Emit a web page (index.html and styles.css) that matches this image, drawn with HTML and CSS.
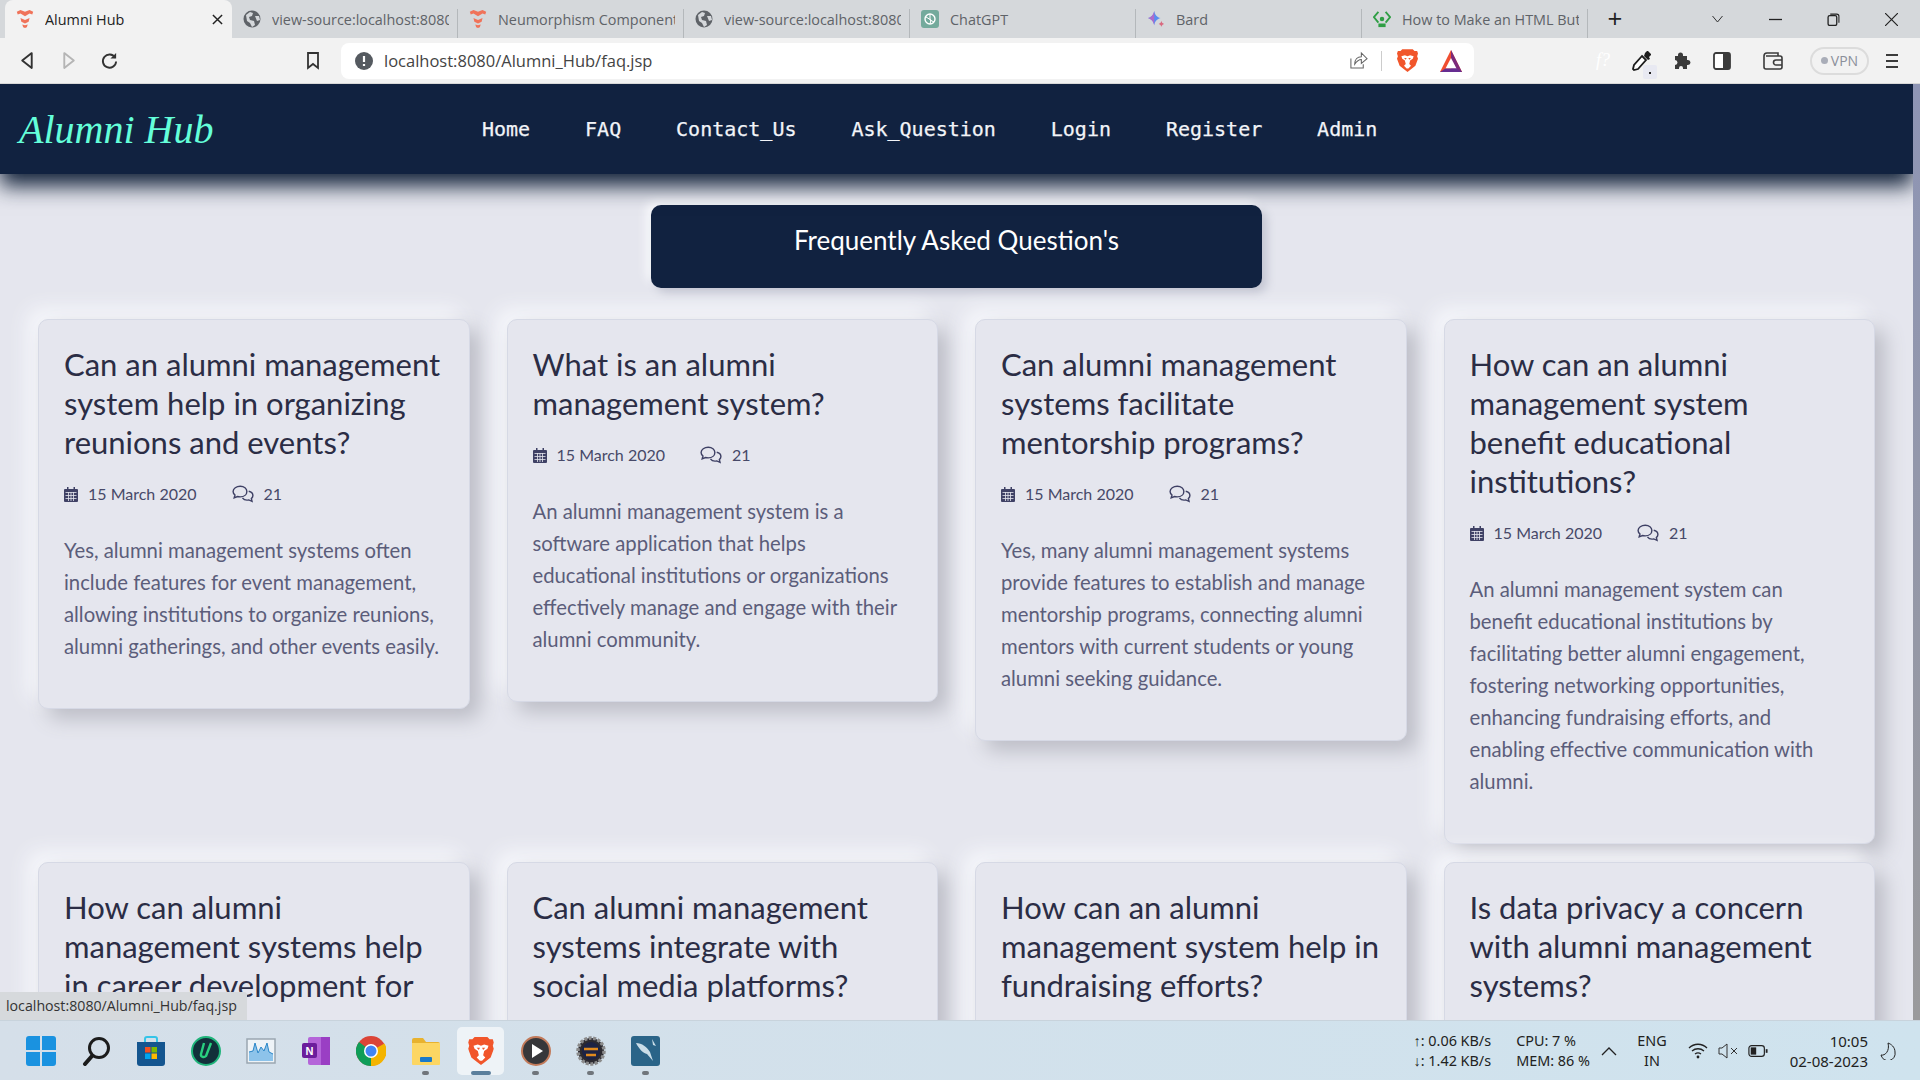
FILE: index.html
```html
<!DOCTYPE html>
<html lang="en">
<head>
  <meta charset="UTF-8" />
  <title>Alumni Hub</title>
  <link rel="stylesheet" href="styles.css">
</head>
<body>

<svg class="sprites" width="0" height="0">
  <symbol id="flame" viewBox="0 0 18 22">
    <path d="M0 3l4-2 5 2 5-2 4 2-1 3-3-1-5 3-5-3-3 1z" fill="#f0735a"/>
    <path d="M4 10l5 2 5-2-1 4-4 2-4-2z" fill="#f0735a"/>
    <path d="M6 17l3 1 3-1-1 3-2 1-2-1z" fill="#f0735a"/>
  </symbol>
  <symbol id="globe" viewBox="0 0 18 18">
    <circle cx="9" cy="9" r="8.500" fill="#5f6368"/>
    <path d="M3 5l4-3 3 1-1 3-3 1 1 3 4 1 1 4-3 2-2-4-3-2zM12 6l4 0 1 4-3 1z" fill="#d5d8db"/>
  </symbol>
  <symbol id="lion" viewBox="0 0 24 28">
    <path d="M6 1h12l2 2 3 0 1 3-1 3 1 3-3 8-5 4-4 3-4-3-5-4-3-8 1-3-1-3 1-3 3 0z" fill="#f1562b"/>
    <path d="M5 9l4-1 3 1 3-1 4 1-1 3-3 2-1 4 2 2-3 3h-2l-3-3 2-2-1-4-3-2z" fill="#fff"/>
    <path d="M8 11h3l-1 2zM13 11h3l-2 2z" fill="#f1562b"/>
  </symbol>
  <symbol id="cal" viewBox="0 0 14 15">
    <path d="M3 0h1.500v2h5V0H11v2h2a1 1 0 0 1 1 1v11a1 1 0 0 1-1 1H1a1 1 0 0 1-1-1V3a1 1 0 0 1 1-1h2z" fill="#3f4165"/>
    <path d="M1.500 5.500h11M1.500 8.500h11M1.500 11.500h11M4.500 5v9M7 5v9M9.500 5v9" stroke="#e6e7ef" stroke-width=".8"/>
  </symbol>
  <symbol id="chat" viewBox="0 0 20 16">
    <path d="M7.500 1C4 1 1 3 1 5.700c0 1.300.7 2.400 1.700 3.200L2 11.500l3-1.200c.8.200 1.600.3 2.500.3 3.500 0 6-2.100 6-4.900S11 1 7.500 1z" fill="none" stroke="#3f4165" stroke-width="1.300"/>
    <path d="M15.200 5.500c2.200.5 3.800 2 3.800 3.900 0 1.100-.6 2.100-1.400 2.800l.6 2.500-3-1.300c-2 .4-4.500-.2-5.700-1.900" fill="none" stroke="#3f4165" stroke-width="1.300"/>
  </symbol>
</svg>

<!-- Вкладки браузера -->
<div class="tabstrip">
  <div class="tab active">
    <svg class="fav"><use href="#flame"/></svg>
    <span class="tab-title">Alumni Hub</span>
    <svg class="tab-close" viewBox="0 0 12 12"><path d="M1 1l10 10M11 1L1 11" stroke="#222" stroke-width="1.600"/></svg>
  </div>
  <div class="tab">
    <svg class="fav"><use href="#globe"/></svg>
    <span class="tab-title">view-source:localhost:8080/</span>
  </div>
  <div class="tab">
    <svg class="fav"><use href="#flame"/></svg>
    <span class="tab-title">Neumorphism Components</span>
  </div>
  <div class="tab">
    <svg class="fav"><use href="#globe"/></svg>
    <span class="tab-title">view-source:localhost:8080/</span>
  </div>
  <div class="tab">
    <svg class="fav" viewBox="0 0 18 18">
      <rect width="18" height="18" rx="3" fill="#74aa9c"/>
      <circle cx="9" cy="9" r="5" fill="none" stroke="#fff" stroke-width="1.400"/>
      <path d="M9 4v6l4 2M5 7l5 3-1 4" fill="none" stroke="#fff"/>
    </svg>
    <span class="tab-title">ChatGPT</span>
  </div>
  <div class="tab">
    <svg class="fav" viewBox="0 0 20 20">
      <path d="M8 1c.8 4 2.500 6.500 7 8-4.500 1.500-6.200 4-7 8-.8-4-2.500-6.500-7-8 4.500-1.500 6.200-4 7-8z" fill="#5a8df0"/>
      <path d="M8 1c-.8 4-2.500 6.500-7 8 4.500 1.500 6.200 4 7 8z" fill="#b06ac8"/>
      <path d="M16 12c.3 1.800 1 2.700 3 3.500-2 .8-2.700 1.700-3 3.500-.3-1.800-1-2.700-3-3.500 2-.8 2.700-1.700 3-3.500z" fill="#d96a80"/>
    </svg>
    <span class="tab-title">Bard</span>
  </div>
  <div class="tab">
    <svg class="fav" viewBox="0 0 20 20">
      <path d="M6 2L1 8l5 6M14 2l5 6-5 6" fill="none" stroke="#2f9e44" stroke-width="2"/>
      <circle cx="10" cy="10" r="2.500" fill="#2f9e44"/>
      <rect x="6" y="15" width="8" height="4" fill="#2f9e44"/>
    </svg>
    <span class="tab-title">How to Make an HTML But</span>
  </div>
  <span class="newtab">+</span>
  <div class="win-controls">
    <svg viewBox="0 0 12 8" class="wc-chev"><path d="M1 1l5 6 5-6" fill="none" stroke="#333"/></svg>
    <svg viewBox="0 0 12 12" class="wc"><path d="M0 6h12" stroke="#222" stroke-width="1.200"/></svg>
    <svg viewBox="0 0 12 12" class="wc"><rect x="1" y="2.500" width="8" height="9" rx="1.500" fill="none" stroke="#222" stroke-width="1.200"/><path d="M3 1h6a2 2 0 0 1 2 2v6" fill="none" stroke="#222"/></svg>
    <svg viewBox="0 0 12 12" class="wc"><path d="M0 0l12 12M12 0L0 12" stroke="#222" stroke-width="1.100"/></svg>
  </div>
</div>

<!-- Адресная строка -->
<div class="toolbar">
  <div class="tb-left">
    <svg class="tb-ic" viewBox="0 0 16 18"><path d="M12 2L3 9l9 7z" fill="none" stroke="#333" stroke-width="1.800" stroke-linejoin="round"/></svg>
    <svg class="tb-ic" viewBox="0 0 16 18"><path d="M4 2l9 7-9 7z" fill="none" stroke="#b5b5b5" stroke-width="1.800" stroke-linejoin="round"/></svg>
    <svg class="tb-ic" viewBox="0 0 18 18"><path d="M15 6a7 7 0 1 0 1 4" fill="none" stroke="#333" stroke-width="2"/><path d="M16 1v6h-6z" fill="#333"/></svg>
  </div>
  <svg class="tb-mark" viewBox="0 0 14 18"><path d="M2 1h10v15l-5-4-5 4z" fill="none" stroke="#333" stroke-width="1.800"/></svg>
  <div class="omnibox">
    <svg class="omni-info" viewBox="0 0 18 18">
      <circle cx="9" cy="9" r="9" fill="#555a60"/>
      <path d="M9 4v6M9 12v2" stroke="#fff" stroke-width="2.200"/>
    </svg>
    <span class="omni-url">localhost:8080/Alumni_Hub/faq.jsp</span>
    <svg class="omni-share" viewBox="0 0 20 20"><path d="M2 8v10h13v-4M6 14c0-5 3-8 7-8V2l6 6-6 5V9c-3 0-5 2-7 5z" fill="none" stroke="#666" stroke-width="1.100"/></svg>
    <span class="omni-sep"></span>
    <svg class="omni-lion"><use href="#lion"/></svg>
    <svg class="omni-bat" viewBox="0 0 24 24">
      <path d="M12 1L1 23h22z" fill="#f04e30"/>
      <path d="M12 1l11 22H12z" fill="#7a2a7a"/>
      <path d="M12 9L6.500 19.500h11z" fill="#fff"/>
      <path d="M1 23l5.500-3.500h11L23 23z" fill="#662d91"/>
    </svg>
  </div>
  <div class="tb-right">
    <span class="ext-f">f?</span>
    <span class="ext-drop">
      <svg class="tb-ic" viewBox="0 0 20 22"><path d="M13 3l2-2 1 0 3 3 0 1-2 2 1 2-2 1-4-4 1-3z" fill="#1d1d1d"/><path d="M10 6l4 4-8 9-4 1-1-1 1-4z" fill="#fff" stroke="#1d1d1d" stroke-width="1.800"/></svg>
      <i class="ext-badge"></i>
    </span>
    <svg class="tb-ic ext-puz" viewBox="0 0 20 20"><path d="M6 5V4a2.500 2.500 0 0 1 5 0v1h4v4h1a2.500 2.500 0 0 1 0 5h-1v4h-4v-1a2 2 0 0 0-4 0v1H3v-4a2.500 2.500 0 0 0 0-5V5z" fill="#3b3b3b"/></svg>
    <svg class="tb-ic ext-side" viewBox="0 0 18 18"><rect x="1" y="1" width="16" height="16" rx="2" fill="#fff" stroke="#3b3b3b" stroke-width="1.800"/><rect x="10" y="1" width="7" height="16" fill="#3b3b3b"/></svg>
    <svg class="tb-ic ext-wal" viewBox="0 0 20 18"><path d="M3 4h14a2 2 0 0 1 2 2v9a2 2 0 0 1-2 2H3a2 2 0 0 1-2-2V4a3 3 0 0 1 3-3h11v3" fill="none" stroke="#3b3b3b" stroke-width="1.600"/><path d="M19 8h-6a2 2 0 0 0 0 5h6" fill="none" stroke="#3b3b3b" stroke-width="1.600"/></svg>
    <span class="vpn"><i></i>VPN</span>
    <svg class="ext-menu" viewBox="0 0 14 16"><path d="M1 2h12M1 8h12M1 14h12" stroke="#3b3b3b" stroke-width="1.800"/></svg>
  </div>
</div>

<!-- Страница -->
<div class="viewport">
  <div class="site">
    <nav class="navbar">
      <a href="#" class="logo">Alumni Hub</a>
      <div class="nav-links">
        <a href="#" class="nav-item">Home</a>
        <a href="#" class="nav-item">FAQ</a>
        <a href="#" class="nav-item">Contact_Us</a>
        <a href="#" class="nav-item">Ask_Question</a>
        <a href="#" class="nav-item">Login</a>
        <a href="#" class="nav-item">Register</a>
        <a href="#" class="nav-item">Admin</a>
      </div>
    </nav>

    <h1 class="faq-heading">Frequently Asked Question's</h1>

    <div class="faq-grid">
      <article class="card">
        <h2 class="card-title">Can an alumni management system help in organizing reunions and events?</h2>
        <div class="card-meta">
          <span class="meta-date"><svg class="ic-cal"><use href="#cal"/></svg>15 March 2020</span>
          <span class="meta-count"><svg class="ic-chat"><use href="#chat"/></svg>21</span>
        </div>
        <p class="card-text">Yes, alumni management systems often include features for event management, allowing institutions to organize reunions, alumni gatherings, and other events easily.</p>
      </article>

      <article class="card">
        <h2 class="card-title">What is an alumni management system?</h2>
        <div class="card-meta">
          <span class="meta-date"><svg class="ic-cal"><use href="#cal"/></svg>15 March 2020</span>
          <span class="meta-count"><svg class="ic-chat"><use href="#chat"/></svg>21</span>
        </div>
        <p class="card-text">An alumni management system is a software application that helps educational institutions or organizations effectively manage and engage with their alumni community.</p>
      </article>

      <article class="card">
        <h2 class="card-title">Can alumni management systems facilitate mentorship programs?</h2>
        <div class="card-meta">
          <span class="meta-date"><svg class="ic-cal"><use href="#cal"/></svg>15 March 2020</span>
          <span class="meta-count"><svg class="ic-chat"><use href="#chat"/></svg>21</span>
        </div>
        <p class="card-text">Yes, many alumni management systems provide features to establish and manage mentorship programs, connecting alumni mentors with current students or young alumni seeking guidance.</p>
      </article>

      <article class="card">
        <h2 class="card-title">How can an alumni management system benefit educational institutions?</h2>
        <div class="card-meta">
          <span class="meta-date"><svg class="ic-cal"><use href="#cal"/></svg>15 March 2020</span>
          <span class="meta-count"><svg class="ic-chat"><use href="#chat"/></svg>21</span>
        </div>
        <p class="card-text">An alumni management system can benefit educational institutions by facilitating better alumni engagement, fostering networking opportunities, enhancing fundraising efforts, and enabling effective communication with alumni.</p>
      </article>

      <article class="card">
        <h2 class="card-title">How can alumni management systems help in career development for alumni?</h2>
      </article>

      <article class="card">
        <h2 class="card-title">Can alumni management systems integrate with social media platforms?</h2>
      </article>

      <article class="card">
        <h2 class="card-title">How can an alumni management system help in fundraising efforts?</h2>
      </article>

      <article class="card">
        <h2 class="card-title">Is data privacy a concern with alumni management systems?</h2>
      </article>
    </div>
  </div>
  <div class="scrollbar"></div>
  <div class="status-bubble">localhost:8080/Alumni_Hub/faq.jsp</div>
</div>

<!-- Панель задач -->
<footer class="taskbar">
  <div class="task-icons">
    <span class="task-icon">
      <svg viewBox="0 0 30 30"><path d="M0 3a3 3 0 0 1 3-3h11v14H0zM16 0h11a3 3 0 0 1 3 3v11H16zM0 16h14v14H3a3 3 0 0 1-3-3zM16 16h14v11a3 3 0 0 1-3 3H16z" fill="#1a92e0"/></svg>
    </span>
    <span class="task-icon">
      <svg viewBox="0 0 30 30"><circle cx="18" cy="12" r="9.500" fill="none" stroke="#1c1c1c" stroke-width="3"/><path d="M11 20l-7 8" stroke="#1c1c1c" stroke-width="4" stroke-linecap="round"/></svg>
    </span>
    <span class="task-icon">
      <svg viewBox="0 0 30 30">
        <path d="M9 6V3a2 2 0 0 1 2-2h8a2 2 0 0 1 2 2v3" fill="none" stroke="#35c4e8" stroke-width="2"/>
        <path d="M1 6h28v21a3 3 0 0 1-3 3H4a3 3 0 0 1-3-3z" fill="#14558f"/>
        <rect x="9" y="11" width="5.500" height="5.500" fill="#f25022"/><rect x="15.500" y="11" width="5.500" height="5.500" fill="#7fba00"/>
        <rect x="9" y="17.500" width="5.500" height="5.500" fill="#00a4ef"/><rect x="15.500" y="17.500" width="5.500" height="5.500" fill="#ffb900"/>
      </svg>
    </span>
    <span class="task-icon">
      <svg viewBox="0 0 30 30"><circle cx="15" cy="15" r="14" fill="#12303a" stroke="#1fb47a" stroke-width="2"/><path d="M13 7l-3 11c-.6 3 3 4 5 2l5-13" fill="none" stroke="#29d07f" stroke-width="2.400"/></svg>
    </span>
    <span class="task-icon">
      <svg viewBox="0 0 30 30"><rect x="1" y="3" width="28" height="24" fill="#eef3f7" stroke="#9aa7b1" stroke-width="1.500"/><path d="M3 25v-9l4-1 2-8 3 10 3-6 3 4 3-8 2 9 4 2v7z" fill="#8dc3ea"/><path d="M3 16l4-1 2-8 3 10 3-6 3 4 3-8 2 9 4 2" fill="none" stroke="#2a86c8"/></svg>
    </span>
    <span class="task-icon">
      <svg viewBox="0 0 30 30"><rect x="7" y="1" width="22" height="28" rx="2" fill="#b465d9"/><path d="M20 1h9v28h-9z" fill="#9a3fc4"/><rect x="1" y="7" width="15" height="15" rx="2" fill="#6b1d9c"/><text x="8.500" y="19" class="onenote-n">N</text></svg>
    </span>
    <span class="task-icon">
      <svg viewBox="0 0 30 30">
        <circle cx="15" cy="15" r="15" fill="#db4437"/>
        <path d="M15 15l13.500-7.500A15 15 0 0 1 15 30z" fill="#f4b400"/>
        <path d="M15 15v15A15 15 0 0 1 3 6z" fill="#0f9d58"/>
        <circle cx="15" cy="15" r="7" fill="#fff"/><circle cx="15" cy="15" r="5.500" fill="#4285f4"/>
      </svg>
    </span>
    <span class="task-icon has-dot">
      <svg viewBox="0 0 30 30"><path d="M1 4a2 2 0 0 1 2-2h9l3 4h12a2 2 0 0 1 2 2v20H1z" fill="#e8b22e"/><path d="M1 7h28v21a1 1 0 0 1-1 1H2a1 1 0 0 1-1-1z" fill="#fcd663"/><rect x="9" y="21" width="12" height="5" rx="1" fill="#1a79c8"/></svg>
    </span>
    <span class="task-icon is-active">
      <svg viewBox="0 0 24 28"><use href="#lion"/></svg>
    </span>
    <span class="task-icon has-dot">
      <svg viewBox="0 0 30 30"><circle cx="15" cy="15" r="14" fill="#37373a" stroke="#c27a5a" stroke-width="2"/><path d="M11 8l11 7-11 7z" fill="#fff"/></svg>
    </span>
    <span class="task-icon has-dot">
      <svg viewBox="0 0 30 30"><circle cx="15" cy="15" r="13" fill="#2c2a30" stroke="#8b8b8b" stroke-width="3.500" stroke-dasharray="3 1.500"/><circle cx="15" cy="15" r="9" fill="#1d2344"/><path d="M8 13h14M10 19h10" stroke="#e08a1e" stroke-width="2.600"/></svg>
    </span>
    <span class="task-icon has-dot">
      <svg viewBox="0 0 30 30"><rect width="29" height="30" rx="3" fill="#2a6488"/><path d="M5 7c6 0 11 4 14 9l3 9-6-7c-4-1-8-5-11-11zM21 3l4 7-3-1z" fill="#c9dde8"/></svg>
    </span>
  </div>
  <div class="tray">
    <div class="tray-stats net">
      <span>↑: 0.06 KB/s</span>
      <span>↓: 1.42 KB/s</span>
    </div>
    <div class="tray-stats cpu">
      <span>CPU: 7 %</span>
      <span>MEM: 86 %</span>
    </div>
    <svg class="tray-chev" viewBox="0 0 16 10"><path d="M1 9l7-7 7 7" fill="none" stroke="#222" stroke-width="1.300"/></svg>
    <div class="tray-lang">
      <span>ENG</span>
      <span>IN</span>
    </div>
    <svg class="tray-ic" viewBox="0 0 20 16"><path d="M1 5c5-5 13-5 18 0M4 8c3.500-3 8.500-3 12 0M7 11c2-1.500 4-1.500 6 0" fill="none" stroke="#222" stroke-width="1.300"/><circle cx="10" cy="14" r="1.400" fill="#222"/></svg>
    <svg class="tray-ic" viewBox="0 0 20 16"><path d="M1 5h3l5-4v14l-5-4H1z" fill="none" stroke="#333"/><path d="M13 5l6 6M19 5l-6 6" stroke="#333"/></svg>
    <svg class="tray-ic" viewBox="0 0 22 14"><rect x="1" y="1" width="17" height="12" rx="3" fill="none" stroke="#222" stroke-width="1.300"/><rect x="3" y="3" width="6" height="8" fill="#222"/><rect x="19.500" y="5" width="2" height="4" fill="#222"/></svg>
    <div class="tray-clock">
      <span>10:05</span>
      <span>02-08-2023</span>
    </div>
    <svg class="tray-moon" viewBox="0 0 16 18"><path d="M8 1c3 1 7 4 7 9a7 7 0 0 1-14 3c4 1 9-4 7-12z" fill="none" stroke="#222"/></svg>
  </div>
</footer>

</body>
</html>
```

FILE: styles.css
```css
:root {
  --navy: #112240;
  --mint: #64ffda;
  --page-bg: #e5e6ee;
  --title: #2b2d45;
  --text: #5b5d7a;
  --meta: #474968;
}

* {
  margin: 0;
  padding: 0;
  box-sizing: border-box;
}

body {
  width: 1920px;
  height: 1080px;
  overflow: hidden;
  display: flex;
  flex-direction: column;
  font-family: 'Open Sans', sans-serif;
  background: var(--page-bg);
}

.sprites {
  position: absolute;
}

/* Вкладки браузера */
.tabstrip {
  height: 38px;
  flex: none;
  display: flex;
  align-items: stretch;
  padding-left: 5px;
  background: #d5d8db;
}

.tab {
  width: 226px;
  display: flex;
  align-items: center;
  gap: 11px;
  padding: 0 9px 0 11px;
  position: relative;
  color: #5f6368;
  font-size: 14.4px;
  white-space: nowrap;
}

.tab::after {
  content: '';
  position: absolute;
  right: 0;
  top: 9px;
  bottom: 0;
  width: 1px;
  background: #b4b8bb;
}

.tab.active {
  width: 227px;
  color: #222;
  background: #f2f2f2;
  border-radius: 8px 8px 0 0;
}

.tab.active::after {
  display: none;
}

.fav {
  width: 18px;
  height: 20px;
  flex: none;
}

.tab-title {
  flex: 1;
  overflow: hidden;
}

.tab-close {
  width: 11px;
  height: 11px;
  flex: none;
}

.newtab {
  width: 54px;
  text-align: center;
  font-size: 26px;
  line-height: 36px;
  color: #222;
}

.win-controls {
  margin-left: auto;
  display: flex;
  align-items: center;
  gap: 45px;
  padding-right: 22px;
}

.wc {
  width: 13px;
  height: 13px;
}

.wc-chev {
  width: 13px;
  height: 8px;
}

/* Адресная строка */
.toolbar {
  height: 46px;
  flex: none;
  display: flex;
  align-items: center;
  background: #f2f2f2;
  border-bottom: 1px solid #d8d8d8;
}

.tb-left {
  width: 306px;
  padding-left: 19px;
  display: flex;
  gap: 24px;
}

.tb-ic {
  width: 17px;
  height: 19px;
  flex: none;
}

.tb-mark {
  width: 14px;
  height: 18px;
  margin-right: 21px;
}

.omnibox {
  width: 1133px;
  height: 36px;
  padding: 0 11px 0 14px;
  display: flex;
  align-items: center;
  background: #fff;
  border-radius: 8px;
}

.omni-info {
  width: 18px;
  height: 18px;
}

.omni-url {
  margin-left: 11px;
  font-size: 16.5px;
  color: #444;
  flex: 1;
}

.omni-share {
  width: 19px;
  height: 19px;
}

.omni-sep {
  width: 1px;
  height: 20px;
  margin: 0 15px 0 13px;
  background: #ccc;
}

.omni-lion {
  width: 21px;
  height: 25px;
  margin-right: 21px;
}

.omni-bat {
  width: 24px;
  height: 24px;
}

.tb-right {
  flex: 1;
  display: flex;
  align-items: center;
  padding-left: 122px;
}

.ext-f {
  width: 22px;
  color: #fff;
  font: italic 18px 'Liberation Serif', serif;
}

.ext-drop {
  margin-left: 14px;
  position: relative;
  display: flex;
}

.ext-drop .tb-ic {
  width: 20px;
  height: 22px;
}

.ext-badge {
  position: absolute;
  left: 11px;
  top: 15px;
  width: 14px;
  height: 14px;
  background: #e8e9f2;
  border-radius: 2px;
}

.ext-badge::after {
  content: '';
  position: absolute;
  left: 6px;
  top: 7px;
  width: 2px;
  height: 2px;
  background: #222;
}

.ext-puz {
  margin-left: 20px;
  width: 20px;
  height: 20px;
}

.ext-side {
  margin-left: 21px;
  width: 18px;
  height: 18px;
}

.ext-wal {
  margin-left: 32px;
  width: 20px;
  height: 18px;
}

.vpn {
  margin-left: 27px;
  width: 59px;
  height: 28px;
  display: flex;
  align-items: center;
  justify-content: center;
  gap: 3px;
  font-size: 14px;
  color: #8b8f9a;
  border: 2px solid #dcdcdc;
  border-radius: 14px;
}

.vpn i {
  width: 7px;
  height: 7px;
  background: #a9adb8;
  border-radius: 50%;
}

.ext-menu {
  width: 14px;
  height: 16px;
  margin-left: 16px;
}

/* Страница */
.viewport {
  flex: 1;
  display: flex;
  position: relative;
  overflow: hidden;
  min-height: 0;
}

.site {
  flex: 1;
  min-width: 0;
  background: var(--page-bg);
}

.scrollbar {
  width: 7px;
  flex: none;
  background: linear-gradient(180deg, #8e95b5, #9a9a9c);
  position: relative;
}

.navbar {
  height: 90px;
  padding-left: 19px;
  display: flex;
  align-items: center;
  background: var(--navy);
  box-shadow: 0 12px 20px rgba(10, 25, 50, 0.95);
  position: relative;
}

.logo {
  width: 463px;
  color: var(--mint);
  font: italic 40px 'Liberation Serif', serif;
  text-decoration: none;
}

.nav-links {
  display: flex;
  gap: 54.9px;
}

.nav-item {
  color: #f2f4f8;
  font: 500 20px 'DejaVu Sans Mono', monospace;
  -webkit-text-stroke: 0.25px #f2f4f8;
  text-decoration: none;
}

.faq-heading {
  width: 611px;
  height: 83px;
  margin: 31px auto 0;
  padding-top: 18px;
  text-align: center;
  font-family: Lato, sans-serif;
  font-size: 26px;
  font-weight: 400;
  line-height: 34px;
  color: #fff;
  background: var(--navy);
  border-radius: 10px;
  box-shadow: 5px 5px 10px #c3c5d2, -5px -5px 10px #f8f9fc;
}

.faq-grid {
  display: grid;
  grid-template-columns: repeat(4, 1fr);
  column-gap: 37px;
  row-gap: 18px;
  align-items: start;
  margin-top: 31px;
  padding: 0 38px;
}

.card {
  padding: 25px 25px 46px;
  background: var(--page-bg);
  border: 1px solid #d6d9e5;
  border-radius: 10px;
  box-shadow: 10px 10px 20px #bcbdc6, -10px -10px 20px #f7f8fc;
}

.card-title {
  font-family: Lato, sans-serif;
  font-size: 31px;
  font-weight: 400;
  line-height: 39px;
  color: var(--title);
}

.card-meta {
  display: flex;
  gap: 35px;
  margin-top: 20px;
  font-family: Lato, sans-serif;
  font-size: 16px;
  line-height: 24px;
  color: var(--meta);
}

.card-meta span {
  display: flex;
  align-items: center;
}

.ic-cal {
  width: 14px;
  height: 15px;
  margin-right: 10px;
}

.ic-chat {
  width: 22px;
  height: 18px;
  margin-right: 10px;
}

.card-text {
  margin-top: 28px;
  font-family: Lato, sans-serif;
  font-size: 20.3px;
  line-height: 32px;
  color: var(--text);
}

.status-bubble {
  position: absolute;
  left: 0;
  bottom: 0;
  width: 247px;
  height: 28px;
  padding-left: 6px;
  font-size: 14.2px;
  line-height: 28px;
  color: #333;
  background: #d6d9dc;
  border-top-right-radius: 3px;
  white-space: nowrap;
}

/* Панель задач */
.taskbar {
  height: 60px;
  flex: none;
  display: flex;
  align-items: center;
  justify-content: space-between;
  background: linear-gradient(90deg, #d5dfe9, #cfe3ee);
  border-top: 1px solid #c8d3dc;
  font-family: 'Noto Sans', sans-serif;
}

.task-icons {
  display: flex;
  padding-left: 13px;
}

.task-icon {
  width: 55px;
  height: 48px;
  display: flex;
  align-items: center;
  justify-content: center;
  position: relative;
}

.task-icon svg {
  width: 30px;
  height: 30px;
}

.task-icon.has-dot::after,
.task-icon.is-active::after {
  content: '';
  position: absolute;
  left: 50%;
  bottom: 0;
  width: 7px;
  height: 4px;
  margin-left: -3.5px;
  background: #70757b;
  border-radius: 2px;
}

.task-icon.is-active {
  background: #eef3f7;
  border-radius: 5px;
  width: 47px;
  margin: 0 4px;
}

.task-icon.is-active::after {
  width: 20px;
  margin-left: -10px;
  background: #5b7f9c;
}

.onenote-n {
  font: bold 11px 'Liberation Sans', sans-serif;
  fill: #fff;
  text-anchor: middle;
}

.tray {
  display: flex;
  align-items: center;
  padding-right: 24px;
  font-size: 14.4px;
  line-height: 20px;
  color: #222;
}

.tray-stats {
  display: flex;
  flex-direction: column;
}

.cpu {
  margin-left: 25px;
}

.tray-chev {
  width: 16px;
  height: 10px;
  margin-left: 11px;
}

.tray-lang {
  display: flex;
  flex-direction: column;
  align-items: center;
  width: 40px;
  margin: 0 16px 0 15px;
}

.tray-ic {
  width: 20px;
  height: 16px;
  margin-right: 10px;
}

.tray-clock {
  display: flex;
  flex-direction: column;
  align-items: flex-end;
  width: 90px;
  font-size: 15px;
}

.tray-moon {
  width: 16px;
  height: 18px;
  margin-left: 12px;
}
```
